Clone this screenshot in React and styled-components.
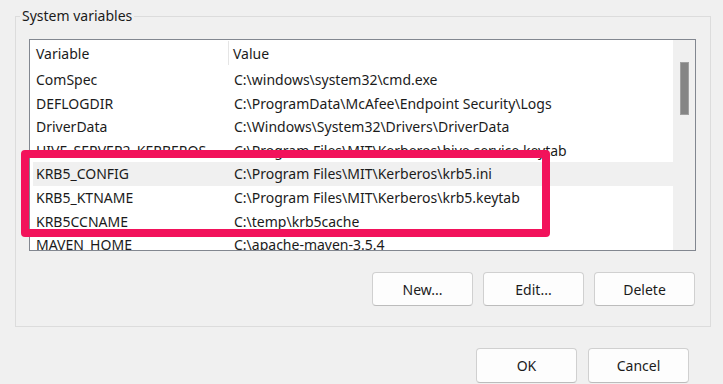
import React from "react";
import styled, { createGlobalStyle } from "styled-components";

const GlobalStyle = createGlobalStyle`
  html, body {
    margin: 0;
    background: #f0f0f0;
    font-family: "Noto Sans", "Open Sans", sans-serif;
    color: #1b1b1b;
  }
`;

const rows = [
  { name: "ComSpec", value: "C:\\windows\\system32\\cmd.exe" },
  { name: "DEFLOGDIR", value: "C:\\ProgramData\\McAfee\\Endpoint Security\\Logs" },
  { name: "DriverData", value: "C:\\Windows\\System32\\Drivers\\DriverData" },
  {
    name: "HIVE_SERVER2_KERBEROS_KEYTAB",
    value: "C:\\Program Files\\MIT\\Kerberos\\hive.service.keytab"
  },
  { name: "KRB5_CONFIG", value: "C:\\Program Files\\MIT\\Kerberos\\krb5.ini", hover: true },
  { name: "KRB5_KTNAME", value: "C:\\Program Files\\MIT\\Kerberos\\krb5.keytab" },
  { name: "KRB5CCNAME", value: "C:\\temp\\krb5cache" },
  { name: "MAVEN_HOME", value: "C:\\apache-maven-3.5.4" },
  { name: "NUMBER_OF_PROCESSORS", value: "8" }
];

const App = () => {
  return (
    <Page>
      <GlobalStyle />
      <Group>
        <Legend>System variables</Legend>
        <List>
          <Table>
            <Header>
              <HeadCell $divider>Variable</HeadCell>
              <HeadCell>Value</HeadCell>
            </Header>
            {rows.map(r => (
              <Row key={r.name} $hover={r.hover}>
                <NameCell>{r.name}</NameCell>
                <ValueCell>{r.value}</ValueCell>
              </Row>
            ))}
          </Table>
          <Scrollbar>
            <Thumb />
          </Scrollbar>
        </List>
        <ButtonRow>
          <Button>New...</Button>
          <Button>Edit...</Button>
          <Button>Delete</Button>
        </ButtonRow>
      </Group>
      <Footer>
        <Button>OK</Button>
        <Button>Cancel</Button>
      </Footer>
      <Highlight />
    </Page>
  );
};
export default App;

const Page = styled.div`
  position: relative;
  width: 723px;
  height: 384px;
  overflow: hidden;
  padding: 16px 0 0 15px;
  box-sizing: border-box;
  font-size: 14px;
`;

const Group = styled.div`
  width: 696px;
  height: 311px;
  box-sizing: border-box;
  border: 1px solid #dcdcdc;
  display: flex;
  flex-direction: column;
`;

const Legend = styled.div`
  align-self: flex-start;
  margin: -11px 0 0 4px;
  padding: 0 2px;
  line-height: 20px;
  background: #f0f0f0;
`;

const List = styled.div`
  margin: 13px 0 0 13px;
  width: 667px;
  height: 212px;
  box-sizing: border-box;
  border: 1px solid #828790;
  background: #fff;
  display: flex;
  overflow: hidden;
`;

const Table = styled.div`
  flex: 1;
  overflow: hidden;
`;

const Header = styled.div`
  display: grid;
  grid-template-columns: 199px 1fr;
  height: 28px;
`;

const HeadCell = styled.div`
  height: 24px;
  margin-top: 1px;
  line-height: 26px;
  padding-left: ${p => (p.$divider ? "6px" : "4px")};
  border-right: ${p => (p.$divider ? "1px solid #e5e5e5" : "none")};
`;

const Row = styled.div`
  display: grid;
  grid-template-columns: 196px 1fr;
  margin-left: 3px;
  height: 23.6px;
  line-height: 23.6px;
  background: ${p => (p.$hover ? "#f0f0f0" : "transparent")};
  white-space: nowrap;
`;

const NameCell = styled.div`
  padding: 0 4px 0 3px;
  overflow: hidden;
  text-overflow: ellipsis;
`;

const ValueCell = styled.div`
  padding-left: 5px;
  overflow: hidden;
`;

const Scrollbar = styled.div`
  width: 22px;
  background: #f0f0f0;
  display: flex;
  justify-content: center;
  padding-top: 22px;
  box-sizing: border-box;
`;

const Thumb = styled.div`
  width: 9px;
  height: 53px;
  background: #858585;
  border: 1px solid #a0a0a0;
  box-sizing: border-box;
`;

const ButtonRow = styled.div`
  display: flex;
  justify-content: flex-end;
  gap: 10px;
  margin: 21px 15px 0 0;
`;

const Button = styled.button`
  width: 101px;
  height: 34px;
  background: #fdfdfd;
  border: 1px solid #d0d0d0;
  border-bottom-color: #bcbcbc;
  border-radius: 4px;
  font-family: inherit;
  font-size: 14px;
  color: #1b1b1b;
  padding: 0;
`;

const Footer = styled.div`
  display: flex;
  justify-content: flex-end;
  gap: 11px;
  margin: 21px 34px 0 0;
  & > button {
    height: 35px;
  }
`;

const Highlight = styled.div`
  position: absolute;
  left: 21px;
  top: 150px;
  width: 529px;
  height: 87px;
  box-sizing: border-box;
  border: 8px solid #f2125b;
  border-radius: 4px;
  pointer-events: none;
`;
